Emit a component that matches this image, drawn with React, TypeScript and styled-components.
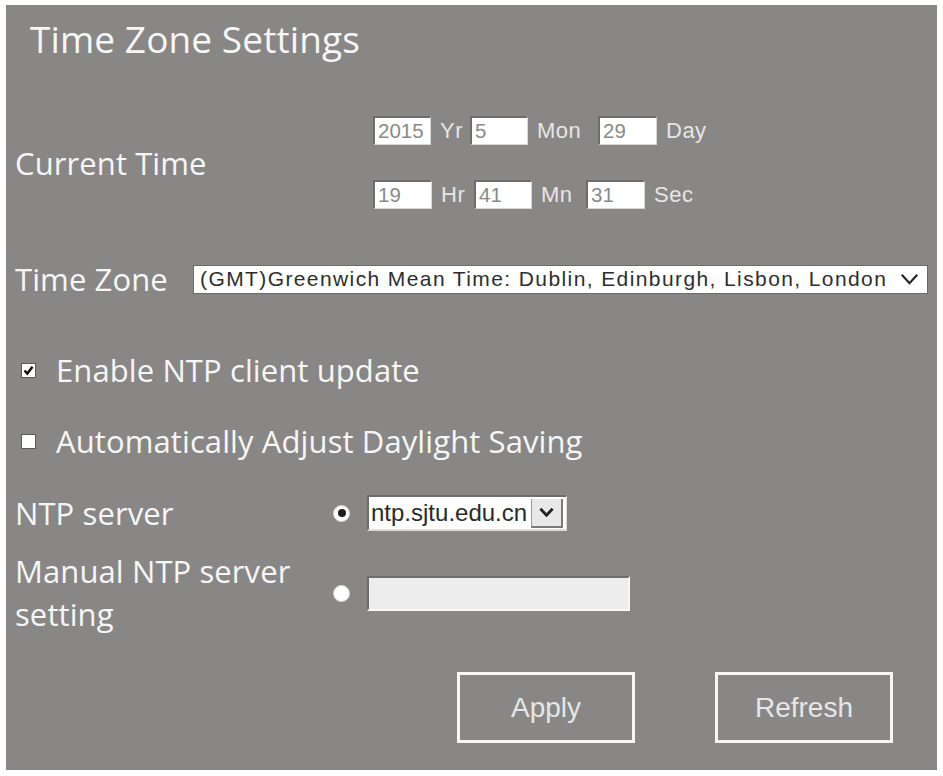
import React from "react";
import styled, { createGlobalStyle } from "styled-components";

const GlobalStyle = createGlobalStyle`
  html, body {
    margin: 0;
    padding: 0;
    background: #ffffff;
  }
  body {
    font-family: "Open Sans", "Liberation Sans", sans-serif;
  }
`;

const Panel = styled.div`
  box-sizing: border-box;
  margin: 5px 0 0 6px;
  width: 931px;
  height: 765px;
  background: #898686;
  padding: 0 9px;
  display: flex;
  flex-direction: column;
  color: #f6f6f6;
`;

const Title = styled.h1`
  margin: 10px 0 0 15px;
  font-weight: 400;
  font-size: 37px;
  line-height: 48px;
  letter-spacing: 0.1px;
`;

const Label = styled.span<{ $width?: number }>`
  display: inline-block;
  flex: none;
  width: ${(p) => (p.$width ? `${p.$width}px` : "auto")};
  font-size: 31px;
  line-height: 40px;
  letter-spacing: 0.1px;
`;

const Row = styled.div<{ $top: number }>`
  display: flex;
  align-items: center;
  margin-top: ${(p) => p.$top}px;
`;

const TimeGrid = styled.div`
  display: flex;
  flex-direction: column;
  gap: 35px;
`;

const TimeLine = styled.div`
  display: flex;
  align-items: center;
  height: 29px;
`;

const Field = styled.div<{ $w: number }>`
  box-sizing: border-box;
  width: ${(p) => p.$w}px;
  height: 29px;
  background: #ffffff;
  border-top: 2px solid #6e6c6c;
  border-left: 2px solid #6e6c6c;
  border-right: 1px solid #d6d6d6;
  border-bottom: 1px solid #d6d6d6;
  padding: 0 3px;
  font-family: "Liberation Sans", Arial, sans-serif;
  font-size: 20.5px;
  line-height: 26px;
  color: #8a8a8a;
`;

const Unit = styled.span<{ $w: number }>`
  display: inline-block;
  width: ${(p) => p.$w}px;
  padding-left: 9px;
  box-sizing: border-box;
  font-family: "Liberation Sans", Arial, sans-serif;
  font-size: 22px;
  letter-spacing: 0.5px;
  color: #e6e6e6;
`;

const ZoneSelect = styled.div`
  box-sizing: border-box;
  width: 735px;
  height: 29px;
  background: #ffffff;
  border: 1px solid #6a6a6a;
  display: flex;
  align-items: center;
  justify-content: space-between;
  padding: 0 8px 0 6px;
  font-family: "Liberation Sans", Arial, sans-serif;
  font-size: 21px;
  letter-spacing: 1.4px;
  color: #2e2e2e;
  white-space: nowrap;
`;

const CheckRow = styled.label<{ $top: number }>`
  display: flex;
  align-items: center;
  gap: 20px;
  margin: ${(p) => p.$top}px 0 0 6px;
`;

const Box = styled.span`
  box-sizing: border-box;
  width: 15px;
  height: 15px;
  background: #ffffff;
  border: 1px solid #5a5a5a;
  display: flex;
  align-items: center;
  justify-content: center;
`;

const Radio = styled.span<{ $on?: boolean }>`
  box-sizing: border-box;
  flex: none;
  width: 17px;
  height: 17px;
  border-radius: 50%;
  background: #ffffff;
  border: 1px solid #d4d4d4;
  display: flex;
  align-items: center;
  justify-content: center;
  margin-right: 17px;
  &::after {
    content: "";
    display: ${(p) => (p.$on ? "block" : "none")};
    width: 8px;
    height: 8px;
    border-radius: 50%;
    background: #1e1e1e;
  }
`;

const ServerSelect = styled.div`
  box-sizing: border-box;
  width: 200px;
  height: 36px;
  background: #ffffff;
  border-top: 2px solid #6e6c6c;
  border-left: 2px solid #6e6c6c;
  border-right: 1px solid #dcdcdc;
  border-bottom: 2px solid #dcdcdc;
  display: flex;
  align-items: center;
  font-family: "Liberation Sans", Arial, sans-serif;
  font-size: 24px;
  color: #2a2a2a;
  padding-left: 2px;
`;

const ServerText = styled.span`
  flex: 1;
  white-space: nowrap;
`;

const DropButton = styled.span`
  box-sizing: border-box;
  flex: none;
  width: 32px;
  height: 29px;
  margin-right: 3px;
  background: #e8e8e8;
  border-left: 1px solid #9a9a9a;
  border-bottom: 2px solid #7a7a7a;
  border-right: 2px solid #7a7a7a;
  display: flex;
  align-items: center;
  justify-content: center;
`;

const ManualInput = styled.div`
  box-sizing: border-box;
  width: 263px;
  height: 35px;
  background: #ededed;
  border-top: 2px solid #6e6c6c;
  border-left: 2px solid #6e6c6c;
  border-right: 2px solid #f8f8f8;
  border-bottom: 2px solid #f8f8f8;
`;

const ManualLabel = styled.div`
  flex: none;
  width: 318px;
  font-size: 31px;
  line-height: 43px;
  letter-spacing: 0.1px;
`;

const Actions = styled.div`
  display: flex;
  gap: 80px;
  margin: 36px 0 0 442px;
`;

const Button = styled.button`
  box-sizing: border-box;
  width: 178px;
  height: 71px;
  background: transparent;
  border: 3px solid #f7f7f7;
  color: #e6e6e6;
  font-family: "Liberation Sans", Arial, sans-serif;
  font-size: 28px;
  padding: 0;
  cursor: pointer;
`;

const Chevron = ({ bold }: { bold?: boolean }) => (
  <svg width={bold ? 15 : 19} height={bold ? 10 : 12} viewBox="0 0 16 10">
    <path
      d="M1.5 1.5 L8 8.5 L14.5 1.5"
      fill="none"
      stroke="#222"
      strokeWidth={bold ? 3 : 1.8}
    />
  </svg>
);

const Tick = () => (
  <svg width="11" height="11" viewBox="0 0 11 11">
    <path d="M1.5 5.5 L4.3 8.6 L9.5 1.8" fill="none" stroke="#111" strokeWidth="2.4" />
  </svg>
);

const dateParts = [
  { value: "2015", w: 58, unit: "Yr", uw: 39 },
  { value: "5", w: 58, unit: "Mon", uw: 70 },
  { value: "29", w: 59, unit: "Day", uw: 50 },
];

const clockParts = [
  { value: "19", w: 59, unit: "Hr", uw: 42 },
  { value: "41", w: 58, unit: "Mn", uw: 54 },
  { value: "31", w: 59, unit: "Sec", uw: 50 },
];

export default function App() {
  return (
    <>
      <GlobalStyle />
      <Panel>
        <Title>Time Zone Settings</Title>

        <Row $top={53}>
          <Label $width={358}>Current Time</Label>
          <TimeGrid>
            {[dateParts, clockParts].map((line, i) => (
              <TimeLine key={i}>
                {line.map((p) => (
                  <React.Fragment key={p.unit}>
                    <Field $w={p.w}>{p.value}</Field>
                    <Unit $w={p.uw}>{p.unit}</Unit>
                  </React.Fragment>
                ))}
              </TimeLine>
            ))}
          </TimeGrid>
        </Row>

        <Row $top={50}>
          <Label $width={178}>Time Zone</Label>
          <ZoneSelect>
            <span>(GMT)Greenwich Mean Time: Dublin, Edinburgh, Lisbon, London</span>
            <Chevron />
          </ZoneSelect>
        </Row>

        <CheckRow $top={51}>
          <Box>
            <Tick />
          </Box>
          <Label>Enable NTP client update</Label>
        </CheckRow>

        <CheckRow $top={31}>
          <Box />
          <Label>Automatically Adjust Daylight Saving</Label>
        </CheckRow>

        <Row $top={32}>
          <Label $width={318}>NTP server</Label>
          <Radio $on />
          <ServerSelect>
            <ServerText>ntp.sjtu.edu.cn</ServerText>
            <DropButton>
              <Chevron bold />
            </DropButton>
          </ServerSelect>
        </Row>

        <Row $top={17}>
          <ManualLabel>
            Manual NTP server
            <br />
            setting
          </ManualLabel>
          <Radio />
          <ManualInput />
        </Row>

        <Actions>
          <Button>Apply</Button>
          <Button>Refresh</Button>
        </Actions>
      </Panel>
    </>
  );
}
